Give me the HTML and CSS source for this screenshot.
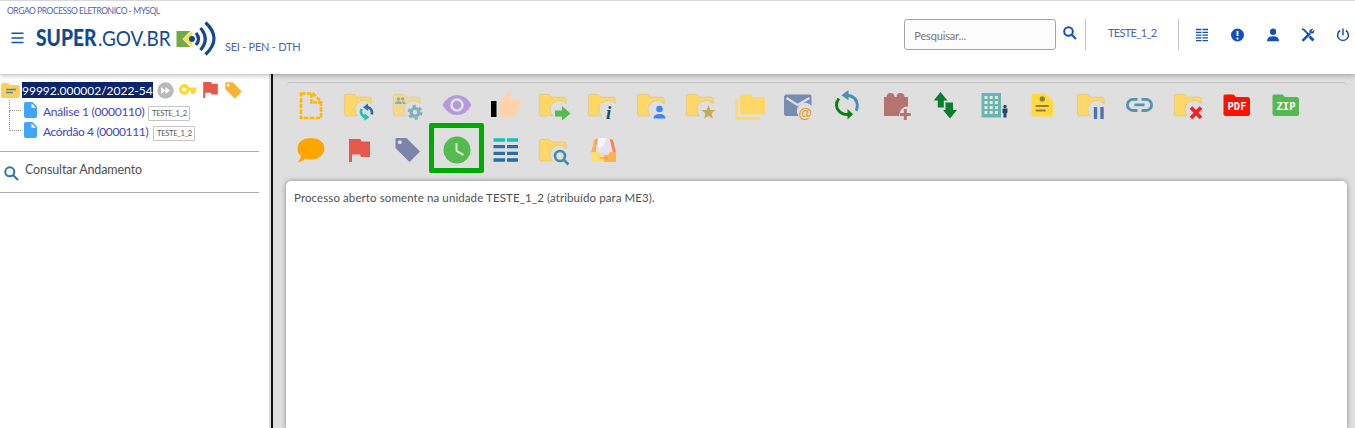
FILE: index.html
```html
<!DOCTYPE html>
<html lang="pt-BR">
<head>
<meta charset="utf-8">
<title>SUPER.GOV.BR</title>
<link rel="stylesheet" href="styles.css">
</head>
<body>
<svg class="defs" width="0" height="0">
  <defs>
    <path id="folder" d="M2 5.300h8.200l2.600 2.800H25q2.200 0 2.200 2.200V14.500A9 9 0 0 0 13.400 27H2.300Q.4 27 .4 25V7q0-1.700 1.600-1.700z" fill="#ffd766" stroke="#d2ba73" stroke-width=".5"/>
    <path id="flag" d="M4 5h11.500l1 2.500H25v15.500h-9l-1-2.500H7V28H4z" fill="#e5584c"/>
    <path id="tag" d="M5 4h10.500L28.500 17.500 18.500 28 4.500 14V5zM8.500 6.200a2 2 0 1 0 .01 0z" fill-rule="evenodd"/>
  </defs>
</svg>
<header class="header">
  <div class="org">ORGAO PROCESSO ELETRONICO - MYSQL</div>
  <div class="bar">
    <svg class="burger" width="14" height="12" viewBox="0 0 14 12" stroke="#1351b4" stroke-width="1.500"><path d="M.5 1.200h12M.5 5.900h12M.5 10.600h12"/></svg>
    <svg class="logo" width="181" height="36" viewBox="0 0 181 36">
      <text class="logo-bold" x="0" y="26" textLength="60.500" lengthAdjust="spacingAndGlyphs">SUPER</text>
      <text class="logo-thin" x="62" y="26" textLength="72.500" lengthAdjust="spacingAndGlyphs">.GOV.BR</text>
      <path d="M140.500 11h14l-8 8 8 8h-14z" fill="#74aa45"/>
      <path d="M156.500 11v4.500l-4 3.500 4 3.500V27l-9.500-8z" fill="#fbe04b"/>
      <path d="M155 12.500l-7.500 6.500 7.500 6.500" fill="none" stroke="#fff" stroke-width="0"/>
      <circle cx="156" cy="19" r="3" fill="#134a8e"/>
      <g fill="none" stroke="#134a8e" stroke-width="3.200"><path d="M160 13q5 6 0 12"/><path d="M164.500 8q9.500 11 0 22"/><path d="M169.500 2.500q17 16 0 32"/></g>
    </svg>
    <span class="unit">SEI - PEN - DTH</span>
    <div class="tools">
      <div class="search">Pesquisar...</div>
      <svg class="mag" width="14" height="14" viewBox="0 0 14 14" fill="none" stroke="#1351b4" stroke-width="2"><circle cx="5.500" cy="5.500" r="4.300"/><path d="M8.700 8.700L13 13"/></svg>
      <div class="user">TESTE_1_2</div>
      <div class="actions">
        <svg width="14" height="14" viewBox="0 0 14 14" stroke="#1351b4" stroke-width="1.300"><path d="M1 1.500h5.500M7.500 1.500H13M1 4.300h5.500M7.500 4.300H13M1 7.100h5.500M7.500 7.100H13M1 9.900h5.500M7.500 9.900H13M1 12.600h5.500M7.500 12.600H13"/></svg>
        <svg width="14" height="14" viewBox="0 0 14 14"><circle cx="7.500" cy="7" r="6.500" fill="#1351b4"/><path d="M7.500 3v5M7.500 9.500v2" stroke="#fff" stroke-width="1.800"/></svg>
        <svg width="14" height="14" viewBox="0 0 14 14" fill="#1351b4"><circle cx="7" cy="3.800" r="3.200"/><path d="M1 13.200q0-5 6-5t6 5z"/></svg>
        <svg width="14" height="14" viewBox="0 0 14 14" fill="none" stroke="#1351b4"><path d="M1 1l2 .8 5 5" stroke-width="1.700"/><path d="M8.500 8.500L12.500 12.500" stroke-width="3"/><path d="M1.500 12.800l7.500-7.500" stroke-width="2.500"/><path d="M12.300.9l-2 2 .8.800 2-2Q14 5 11 5.600 7.600 5.600 8.500 2.500 9.500.5 12.300.9z" fill="#1351b4" stroke="none"/></svg>
        <svg width="14" height="14" viewBox="0 0 14 14" fill="none" stroke="#1351b4" stroke-width="1.500"><path d="M4.200 2.500a5.400 5.400 0 1 0 5.600 0M7 .5v6.800"/></svg>
      </div>
    </div>
  </div>
</header>
<div class="body">
  <aside class="side">
    <div class="tree">
      <div class="node root">
        <svg width="19" height="15" viewBox="0 0 19 15"><path d="M2 0h5l2 2h8q2 0 2 2v9q0 2-2 2H2q-2 0-2-2V2q0-2 2-2z" fill="#ffcf55"/><path d="M5 6.500h10M5 9.500h7" stroke="#50889c" stroke-width="1.600"/></svg>
        <span class="number">99992.000002/2022-54</span>
        <svg class="ff" width="17" height="17" viewBox="0 0 17 17"><circle cx="8.500" cy="8.500" r="8.200" fill="#b9b9b9"/><path d="M4 5l4.500 3.500L4 12zM8.500 5L13 8.500 8.500 12z" fill="#fff"/></svg>
        <svg class="key" width="18" height="12" viewBox="0 0 18 12"><path d="M5.300 0a5.300 5.300 0 0 1 5 3.600H17.500V7H16v3h-4V7h-1.700A5.300 5.300 0 1 1 5.300 0zm0 3.500a2 2 0 1 0 .01 0z" fill="#ffda36" fill-rule="evenodd"/></svg>
        <svg class="rflag" width="15" height="16" viewBox="4 5 21 23"><use href="#flag"/></svg>
        <svg class="rtag" width="17" height="17" viewBox="4 4 25 24" fill="#f9b232"><use href="#tag"/></svg>
      </div>
      <div class="node leaf"><i class="branch"></i>
        <svg width="13" height="16" viewBox="0 0 13 16"><path d="M2 0h6.500L13 4.500V14q0 2-2 2H2q-2 0-2-2V2q0-2 2-2z" fill="#40a4fb"/><path d="M7.500 1.200v4.500H12z" fill="#fff"/></svg>
        <span class="doc doc-a">Análise 1 (0000110)</span><span class="badge">TESTE_1_2</span></div>
      <div class="node leaf"><i class="branch"></i>
        <svg width="13" height="16" viewBox="0 0 13 16"><path d="M2 0h6.500L13 4.500V14q0 2-2 2H2q-2 0-2-2V2q0-2 2-2z" fill="#40a4fb"/><path d="M7.500 1.200v4.500H12z" fill="#fff"/></svg>
        <span class="doc doc-b">Acórdão 4 (0000111)</span><span class="badge">TESTE_1_2</span></div>
    </div>
    <div class="track">
      <svg width="15" height="15" viewBox="0 0 15 15" fill="none" stroke="#2b74b0" stroke-width="2"><circle cx="5.800" cy="5.800" r="4.500"/><path d="M9 9l5 5"/></svg>
      <span>Consultar Andamento</span>
    </div>
  </aside>
  <div class="splitter"></div>
  <main class="main">
    <div class="icons">
      <svg viewBox="0 0 32 32"><path d="M6 4.500h12l8 8V29H6z" fill="none" stroke="#ffb700" stroke-width="2.600" stroke-dasharray="4.500 1.300"/><path d="M16.500 5v8.500H26" fill="none" stroke="#ffb700" stroke-width="2.600" stroke-dasharray="4 1"/></svg>
      <svg viewBox="0 0 32 32"><use href="#folder"/><g fill="none" stroke-width="2.600"><path d="M21 28.300q-5.500-3-3.500-8.300" stroke="#14c4b9"/><path d="M23.500 18q5.500 2 4.300 7.500" stroke="#286ea8"/></g><path d="M20.500 24.500l5 3.800-5 3.400z" fill="#14c4b9"/><path d="M24 14.500l-5 3.800 5 3.400z" fill="#286ea8"/></svg>
      <svg viewBox="0 0 32 32"><g opacity=".65"><use href="#folder"/></g><g fill="#83afbd"><circle cx="5.500" cy="10" r="1.800"/><circle cx="9.700" cy="10" r="1.800"/><path d="M2 15q0-2.800 3.500-2.800t3.500 2.800zM9.700 15q0-2-1-2.700 4 0 4 2.700z"/></g><g fill="none" stroke="#83afbd"><circle cx="22" cy="23.300" r="3.900" stroke-width="3.200"/><circle cx="22" cy="23.300" r="6.200" stroke-width="2.500" stroke-dasharray="3.250 3.250"/></g></svg>
      <svg viewBox="0 0 32 32"><path d="M.5 16Q6 6 15 6T29.500 16q-5.500 10-14.500 10T.5 16z" fill="#b49add"/><circle cx="15" cy="16" r="5.500" fill="none" stroke="#e0e0e0" stroke-width="2.600"/></svg>
      <svg viewBox="0 0 32 32"><path d="M1 12h5.500v16H1z"/><path d="M9 14l8.500-10q2-3 3.500 0 .5 2-1 6.500h7.500q3 0 3 3.500l-3.500 12q-1 2-3 2H12q-3 0-3-3z" fill="#ffd1ad"/></svg>
      <svg viewBox="0 0 32 32"><use href="#folder"/><path d="M16 21.500h7V17l8.500 7.500-8.500 7v-4h-7z" fill="#55bb4d"/></svg>
      <svg viewBox="0 0 32 32"><use href="#folder"/><text class="info" x="18" y="30">i</text></svg>
      <svg viewBox="0 0 32 32"><use href="#folder"/><g fill="#3f85f7"><circle cx="22.500" cy="20" r="3.300"/><path d="M16.500 29.500q0-4.500 6-4.500t6 4.500z"/></g></svg>
      <svg viewBox="0 0 32 32"><use href="#folder"/><path d="M22.500 16l1.900 5h5l-3.900 3.400 1.500 5.300-4.500-3-4.500 3 1.500-5.300-3.900-3.400h5z" fill="#c3ad53"/></svg>
      <svg viewBox="0 0 32 32"><path d="M7.500 5.500h8l2.500 2.500H27.500q2.500 0 2.500 2.500v13q0 2-2 2H7q-2 0-2-2V7.500q0-2 2.500-2z" fill="#ffd766"/><path d="M1.500 10v18q0 1.500 1.500 1.500H25" fill="none" stroke="#ffd766" stroke-width="2.300"/></svg>
      <svg viewBox="0 0 32 32"><path d="M2.500 5.500h24q2 0 2 2V17a7 7 0 0 0-13 10H3Q1 27 1 25V7.500z" fill="#778cb3"/><path d="M3.500 9l11 7 12-7" fill="none" stroke="#e0e0e0" stroke-width="2.200"/><text class="at" x="15.500" y="29">@</text></svg>
      <svg viewBox="0 0 32 32"><g fill="none" stroke-width="2.900"><path d="M15 6.300Q25.500 7.500 25.300 17.500q-.2 2.300-1.300 4.300" stroke="#498fb6"/><path d="M6.800 9.500Q2 16.500 7 22q3.500 4 9.500 3.500" stroke="#088010"/></g><path d="M16.500 1L9.500 6.300l7 5z" fill="#498fb6"/><path d="M15.500 20L21 25.300 15.500 30.500z" fill="#088010"/></svg>
      <svg viewBox="0 0 32 32"><path d="M3 8h2.500q0-4 4-4t4 4h2q0-4 4-4t4 4H27v9.500q-8 0-9 9.500H3z" fill="#b47570"/><path d="M24.300 20v11M18.800 25.500h11" stroke="#b47570" stroke-width="3"/></svg>
      <svg viewBox="0 0 32 32" fill="#087e2a"><path d="M10.500 3l7 8.500h-3.700V18.500h-6v-7h-4zM15.500 13.500h7.500v7.500H27L20 29.500 13 21h2.500z"/></svg>
      <svg viewBox="0 0 32 32"><path d="M2.500 4H22v24.500H2.500z" fill="#68b7ad"/><path d="M5.500 8.500H19M5.500 13.500H19M5.500 18.500H19M5.500 23.500H19" stroke="#e4e8e6" stroke-width="3" stroke-dasharray="3 2.200"/><circle cx="26" cy="17.500" r="1.700" fill="#214b68"/><path d="M23.500 19.500h5V24h-1v4.500h-3V24h-1z" fill="#214b68"/></svg>
      <svg viewBox="0 0 32 32"><path d="M5 4.500h12.500l7.500 7.500v13.500q0 2-2 2H5.500q-2 0-2-2V6.500q0-2 1.500-2z" fill="#ffd93e"/><circle cx="14.300" cy="10" r="2.700" fill="#90803a"/><path d="M7.700 17h13M7.700 21.500h10" stroke="#90803a" stroke-width="2.200"/></svg>
      <svg viewBox="0 0 32 32"><use href="#folder"/><path d="M18.500 18v12M25 18v12" stroke="#4e72b2" stroke-width="3.400"/></svg>
      <svg viewBox="0 0 32 32" fill="none" stroke="#5593b4" stroke-width="2.800"><path d="M12.500 10.300H8a5.600 5.600 0 0 0 0 11.200h4.500M16.500 10.300h4.500a5.600 5.600 0 0 1 0 11.200h-4.500M9.500 15.900h10"/></svg>
      <svg viewBox="0 0 32 32"><use href="#folder"/><path d="M17 18.500l10 10.500M27 18.500L17 29" stroke="#ee202b" stroke-width="3.700"/></svg>
      <svg viewBox="0 0 32 32"><path d="M2 5.500h8.500l2.500 2.500H24.500q2.500 0 2.500 2.500V25q0 2-2 2H2.500q-2 0-2-2V7q0-1.500 1.500-1.500z" fill="#fe1100"/><text class="file" x="4.500" y="20.500" textLength="19">PDF</text></svg>
      <svg viewBox="0 0 32 32"><path d="M2 5.500h8.500l2.500 2.500H24.500q2.500 0 2.500 2.500V25q0 2-2 2H2.500q-2 0-2-2V7q0-1.500 1.500-1.500z" fill="#55b94f"/><text class="file" x="4.500" y="20.500" textLength="19">ZIP</text></svg>
      <svg viewBox="0 0 32 32"><path d="M15.800 4C24 4 29.500 8.500 29.500 14.500S24 25.500 16 25.500q-3 0-5.500-1Q7 28 3 28q2.500-3 3-6-3.500-3-3.500-7.500C2.500 8.500 8 4 15.800 4z" fill="#ffa500"/></svg>
      <svg viewBox="0 0 32 32"><path d="M5 5h11.500l1 2.500H26v15.500h-9l-1-2.500H8V28H5z" fill="#e5584c"/></svg>
      <svg viewBox="0 0 32 32" fill="#7c84aa"><path d="M3 4h10.500L27 17.500 16.500 28 2.500 14V5zM6.800 6.200a2 2 0 1 0 .01 0z" fill-rule="evenodd"/></svg>
      <div class="chosen"><svg viewBox="0 0 32 32"><circle cx="15" cy="16" r="13.500" fill="#55ba50"/><path d="M14.500 9v8l7 3.800" fill="none" stroke="#d9edd7" stroke-width="2"/></svg></div>
      <svg viewBox="0 0 32 32" stroke-width="3.300"><path d="M3.500 6h11.500M17 6h11" stroke="#14c4b9"/><path d="M3.500 12.600h11.500M17 12.600h11M3.500 19.400h11.500M17 19.400h11M3.500 26h11.500M17 26h11" stroke="#286ea8"/></svg>
      <svg viewBox="0 0 32 32"><use href="#folder"/><g fill="none" stroke="#438eae" stroke-width="2.700"><circle cx="21" cy="22" r="5"/><path d="M24.500 25.500l5 5"/></g></svg>
      <svg viewBox="0 0 32 32"><path d="M6.500 6l3-1.500-2 14H3.500zM21 4.500L25 6l3 12.500h-5z" fill="#ff8250"/><path d="M6 6h2.500L7 19H3.500z" fill="#ffb052"/><path d="M10.500 4h11L25 19H7.500z" fill="#e5e3f3"/><path d="M11 4h7l-2 7-4 3-3-2z" fill="#faf6fc"/><path d="M3.500 18H11l2 3h3v7H3.500z" fill="#ffdf73"/><path d="M16 21h4l2-3h6v10H16z" fill="#ffb052"/><path d="M12 24h8" stroke="#ff8250"/></svg>
    </div>
    <section class="panel"><span>Processo aberto somente na unidade TESTE_1_2 (atribuído para ME3).</span></section>
  </main>
</div>
</body>
</html>
```
FILE: styles.css
```css
*, *::after { box-sizing: border-box; }
body { margin: 0; height: 428px; overflow: hidden; background: #fff; font-family: Lato, sans-serif; font-size: 12px; color: #505050; }
svg { display: block; flex: none; overflow: visible; }
.defs { position: absolute; }
.header { position: relative; z-index: 1; height: 74px; border-top: 1px solid #d8d8d8; background: #fff; box-shadow: 0 1px 5px rgba(0,0,0,.32); }
.org { height: 19px; padding: 4px 0 0 7px; font-size: 8.500px; line-height: 12px; color: #4c66b0; letter-spacing: -.45px; white-space: nowrap; }
.bar { display: flex; align-items: flex-start; }
.burger { margin: 12px 0 0 11px; }
.logo { margin: 0 0 0 11px; }
.logo-bold { font: 900 22px Lato, sans-serif; fill: #134a8e; }
.logo-thin { font: 400 22px Lato, sans-serif; fill: #134a8e; }
.unit { margin: 20px 0 0 8px; line-height: 14px; font-size: 11px; letter-spacing: -.25px; color: #4c66b0; white-space: nowrap; }
.tools { display: flex; margin-left: auto; }
.search { width: 152px; height: 31px; margin-right: 7px; padding: 9px; border: 1px solid #a5a5a5; border-radius: 3px; background: #fcfcfc; font-size: 11px; line-height: 14px; letter-spacing: -.15px; color: #777; margin-top: -1px; }
.mag { margin: 6px 8px 0 0; }
.user { width: 94px; height: 31px; margin-top: -1px; padding-top: 7px; border: solid #c4c4c4; border-width: 0 1px; text-align: center; line-height: 14px; font-size: 11px; letter-spacing: -.65px; color: #4c66b0; }
.actions { display: flex; gap: 21.200px; padding: 8px 5px 0 16px; }
.body { display: flex; height: 354px; }
.side { width: 269px; }
.tree { width: 259px; height: 78px; padding-top: 6px; border-bottom: 1px solid #aaa; }
.node { display: flex; align-items: center; height: 20px; white-space: nowrap; }
.root { padding-left: 1px; height: 20px; }
.number { margin-left: 2px; width: 131px; height: 16px; line-height: 17px; background: #0b246a; color: #fff; font-size: 12px; letter-spacing: -.02px; }
.ff { margin-left: 4px; }
.key { margin-left: 5px; }
.rflag { margin-left: 6px; }
.rtag { margin-left: 7px; }
.leaf { padding-left: 9px; }
.branch { align-self: flex-start; width: 12px; height: 11px; margin-right: 3px; border: dotted #999; border-width: 0 0 1px 1px; }
.leaf + .leaf .branch { height: 20px; margin-top: -9px; }
.doc { margin-left: 6px; padding-top: 4px; font-size: 12px; line-height: 16px; letter-spacing: -.25px; color: #4343c2; }
.doc-a { width: 101px; }
.doc-b { width: 106px; letter-spacing: -.37px; }
.badge { height: 15px; margin-left: 4px; padding-left: 3px; border: 1px solid #c5c5c5; border-radius: 1px; font-size: 7.500px; line-height: 14px; letter-spacing: -.25px; color: #555; position: relative; top: 3px; width: 42px; }
.track { display: flex; width: 259px; height: 41px; border-bottom: 1px solid #aaa; }
.track svg { margin: 14px 0 0 4px; }
.track span { margin: 10px 0 0 6px; line-height: 16px; font-size: 12.500px; letter-spacing: -.12px; }
.splitter { width: 4px; border-left: 2px solid #dcdcdc; border-right: 2px solid #111; }
.main { flex: 1; padding: 8px 8px 0 13px; background: #dfdfdf; }
.icons { display: grid; grid-template-columns: repeat(21, 48.850px); grid-auto-rows: 45px; height: 99px; padding: 6px 0 0 9px; border-top: 1px solid #c5c5c5; border-radius: 5px 5px 0 0; }
.icons svg { width: 32px; height: 32px; }
.chosen { position: relative; width: 32px; height: 32px; }
.chosen::after { content: ""; position: absolute; left: -12.500px; top: -11px; width: 55px; height: 50px; border: 5px solid #00aa04; border-radius: 2px; }
.info { font: italic bold 19px "Liberation Serif", serif; fill: #214b68; }
.at { font: bold 14px "Liberation Sans", sans-serif; fill: #e8a126; }
.file { font: bold 10.500px "DejaVu Sans Mono", monospace; fill: #fff; }
.panel { height: 247px; padding: 10px 8px; border-radius: 5px 5px 0 0; background: #fff; box-shadow: 0 0 5px rgba(0,0,0,.4); line-height: 14px; font-size: 11.500px; letter-spacing: .1px; }
```
